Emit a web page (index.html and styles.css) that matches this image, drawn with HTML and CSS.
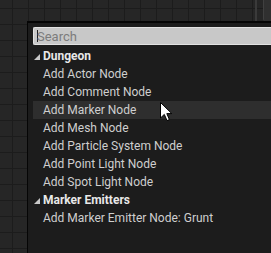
FILE: index.html
```html
<!DOCTYPE html>
<html>
<head>
<meta charset="utf-8">
<link rel="stylesheet" href="styles.css">
</head>
<body>
<div class="canvas">
  <div class="side-strip"></div>
  <div class="side-panel"></div>
  <div class="menu">
    <div class="search"><span class="caret"></span><span class="placeholder">Search</span></div>
    <div class="list">
      <div class="header"><span class="tri"></span>Dungeon</div>
      <div class="item">Add Actor Node</div>
      <div class="item">Add Comment Node</div>
      <div class="item hover">Add Marker Node</div>
      <div class="item">Add Mesh Node</div>
      <div class="item">Add Particle System Node</div>
      <div class="item">Add Point Light Node</div>
      <div class="item">Add Spot Light Node</div>
      <div class="header"><span class="tri"></span>Marker Emitters</div>
      <div class="item">Add Marker Emitter Node: Grunt</div>
    </div>
  </div>
  <svg class="cursor" width="13" height="20" viewBox="0 0 13 20">
    <path d="M0.5 0.5 L0.5 16 L4.3 12.4 L7 18.6 L9.4 17.6 L6.8 11.6 L11.8 11.6 Z" fill="#fff" stroke="#000" stroke-width="1"/>
  </svg>
</div>
</body>
</html>
```
FILE: styles.css
```css
html, body {
  margin: 0;
  padding: 0;
}
body {
  width: 271px;
  height: 253px;
  overflow: hidden;
  font-family: Roboto, "Liberation Sans", sans-serif;
}
.canvas {
  position: relative;
  width: 271px;
  height: 253px;
  background-color: #262626;
  background-image:
    linear-gradient(to right, #1c1c1c 1px, transparent 1px),
    linear-gradient(to bottom, #1c1c1c 1px, transparent 1px);
  background-size: 16px 16px;
  background-position: 12px 8px;
  overflow: hidden;
}
.side-strip {
  position: absolute;
  left: 255px;
  top: 0;
  width: 2px;
  height: 22px;
  background: #3a3a3a;
}
.side-panel {
  position: absolute;
  left: 263px;
  top: 0;
  width: 10px;
  height: 21px;
  background: #303030;
  border-left: 1px solid #404040;
  border-bottom-left-radius: 2px;
}
.menu {
  position: absolute;
  left: 27px;
  top: 21px;
  right: -10px;
  bottom: -10px;
  background: #1c1c1c;
  border-left: 1px solid #050505;
  border-top: 2px solid #050505;
  padding: 4px 0 0 5px;
}
.search {
  height: 16px;
  background: #c8c8c8;
  border: 1px solid #e2e2e2;
  border-right: none;
  border-radius: 2px 0 0 2px;
  display: flex;
  align-items: center;
  padding-left: 3px;
  font-size: 13px;
}
.caret {
  width: 1px;
  height: 12px;
  background: #222;
  margin-right: -1px;
}
.placeholder {
  color: #7c7c7c;
}
.list {
  margin-top: 2px;
}
.header, .item {
  height: 18px;
  line-height: 18px;
  font-size: 12px;
  white-space: nowrap;
}
.header {
  display: flex;
  align-items: center;
  color: #e8e8e8;
  font-weight: bold;
  padding-left: 1px;
}
.tri {
  width: 0;
  height: 0;
  border-left: 6px solid transparent;
  border-bottom: 6px solid #c8c8c8;
  margin-right: 3px;
  margin-top: 2px;
}
.item {
  color: #cfcfcf;
  padding-left: 10px;
}
.item.hover {
  background: #2e2e2e;
}
.cursor {
  position: absolute;
  left: 160px;
  top: 102px;
}
```
